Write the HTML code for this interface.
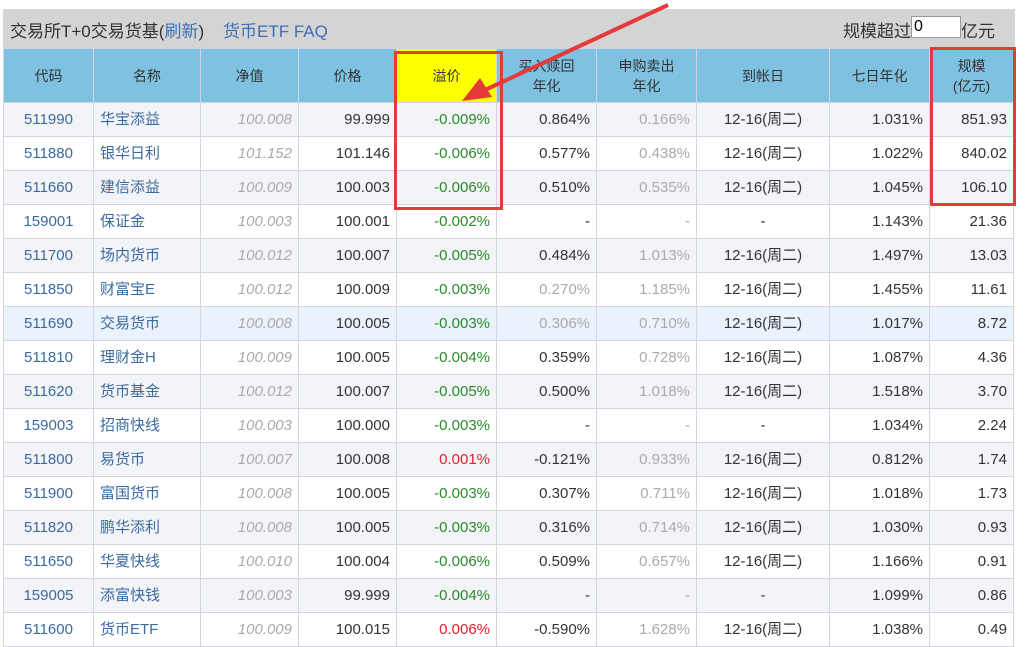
<!DOCTYPE html>
<html><head><meta charset="utf-8"><style>
body{margin:0;width:1027px;height:639px;overflow:hidden;background:#fff;font-family:"Liberation Sans","Noto Sans CJK SC",sans-serif;position:relative}
.bar{position:absolute;left:3px;top:9px;width:1012px;height:39px;background:#d4d4d4;font-size:17px;color:#333}
.bar .l{position:absolute;left:7px;top:8px}
.bar a{color:#3b6fb6}
.bar .r{position:absolute;right:20px;top:8px}
.bar input{width:44px;height:20px;font-size:16px;border:1px solid #999;padding:0 2px;vertical-align:top;margin-top:-1px}
table{position:absolute;left:3px;top:48px;border-collapse:collapse;table-layout:fixed;font-size:15px}
th{background:#7fc1e0;color:#333;font-weight:normal;height:53px;padding:0;border:1px solid #d0d6e0;line-height:20px;font-size:14px}
td{height:33px;padding:0 6px;border:1px solid #d3d6df;text-align:right;color:#333;line-height:18px}
tr.o td{background:#f3f4f8}
tr.h td{background:#eaf2fb}
td.c{text-align:center;color:#3b6aa0}
td.n{text-align:left;color:#3b6aa0}
td.g{color:#aaa;font-style:italic}
td.p{color:#2a8a2a}
td.rd{color:#e0202a}
td.lg{color:#aaa}
td.m{text-align:center}
.box{position:absolute;border:3px solid #e53a3a}
</style></head><body>
<div class="bar"><span class="l">交易所T+0交易货基(<a>刷新</a>) &nbsp;&nbsp;&nbsp;<a>货币ETF FAQ</a></span><span class="r">规模超过<input value="0">亿元</span></div>
<table>
<colgroup><col style="width:90px"><col style="width:107px"><col style="width:98px"><col style="width:98px"><col style="width:100px"><col style="width:100px"><col style="width:100px"><col style="width:133px"><col style="width:100px"><col style="width:84px"></colgroup>
<tr><th>代码</th><th>名称</th><th>净值</th><th>价格</th><th style="background:#ffff00">溢价</th><th>买入赎回<br>年化</th><th>申购卖出<br>年化</th><th>到帐日</th><th>七日年化</th><th>规模<br>(亿元)</th></tr>
<tr class="o"><td class="c">511990</td><td class="n">华宝添益</td><td class="g">100.008</td><td>99.999</td><td class="p">-0.009%</td><td>0.864%</td><td class="lg">0.166%</td><td class="m">12-16(周二)</td><td>1.031%</td><td>851.93</td></tr>
<tr><td class="c">511880</td><td class="n">银华日利</td><td class="g">101.152</td><td>101.146</td><td class="p">-0.006%</td><td>0.577%</td><td class="lg">0.438%</td><td class="m">12-16(周二)</td><td>1.022%</td><td>840.02</td></tr>
<tr class="o"><td class="c">511660</td><td class="n">建信添益</td><td class="g">100.009</td><td>100.003</td><td class="p">-0.006%</td><td>0.510%</td><td class="lg">0.535%</td><td class="m">12-16(周二)</td><td>1.045%</td><td>106.10</td></tr>
<tr><td class="c">159001</td><td class="n">保证金</td><td class="g">100.003</td><td>100.001</td><td class="p">-0.002%</td><td>-</td><td class="lg">-</td><td class="m">-</td><td>1.143%</td><td>21.36</td></tr>
<tr class="o"><td class="c">511700</td><td class="n">场内货币</td><td class="g">100.012</td><td>100.007</td><td class="p">-0.005%</td><td>0.484%</td><td class="lg">1.013%</td><td class="m">12-16(周二)</td><td>1.497%</td><td>13.03</td></tr>
<tr><td class="c">511850</td><td class="n">财富宝E</td><td class="g">100.012</td><td>100.009</td><td class="p">-0.003%</td><td class="lg">0.270%</td><td class="lg">1.185%</td><td class="m">12-16(周二)</td><td>1.455%</td><td>11.61</td></tr>
<tr class="h"><td class="c">511690</td><td class="n">交易货币</td><td class="g">100.008</td><td>100.005</td><td class="p">-0.003%</td><td class="lg">0.306%</td><td class="lg">0.710%</td><td class="m">12-16(周二)</td><td>1.017%</td><td>8.72</td></tr>
<tr><td class="c">511810</td><td class="n">理财金H</td><td class="g">100.009</td><td>100.005</td><td class="p">-0.004%</td><td>0.359%</td><td class="lg">0.728%</td><td class="m">12-16(周二)</td><td>1.087%</td><td>4.36</td></tr>
<tr class="o"><td class="c">511620</td><td class="n">货币基金</td><td class="g">100.012</td><td>100.007</td><td class="p">-0.005%</td><td>0.500%</td><td class="lg">1.018%</td><td class="m">12-16(周二)</td><td>1.518%</td><td>3.70</td></tr>
<tr><td class="c">159003</td><td class="n">招商快线</td><td class="g">100.003</td><td>100.000</td><td class="p">-0.003%</td><td>-</td><td class="lg">-</td><td class="m">-</td><td>1.034%</td><td>2.24</td></tr>
<tr class="o"><td class="c">511800</td><td class="n">易货币</td><td class="g">100.007</td><td>100.008</td><td class="rd">0.001%</td><td>-0.121%</td><td class="lg">0.933%</td><td class="m">12-16(周二)</td><td>0.812%</td><td>1.74</td></tr>
<tr><td class="c">511900</td><td class="n">富国货币</td><td class="g">100.008</td><td>100.005</td><td class="p">-0.003%</td><td>0.307%</td><td class="lg">0.711%</td><td class="m">12-16(周二)</td><td>1.018%</td><td>1.73</td></tr>
<tr class="o"><td class="c">511820</td><td class="n">鹏华添利</td><td class="g">100.008</td><td>100.005</td><td class="p">-0.003%</td><td>0.316%</td><td class="lg">0.714%</td><td class="m">12-16(周二)</td><td>1.030%</td><td>0.93</td></tr>
<tr><td class="c">511650</td><td class="n">华夏快线</td><td class="g">100.010</td><td>100.004</td><td class="p">-0.006%</td><td>0.509%</td><td class="lg">0.657%</td><td class="m">12-16(周二)</td><td>1.166%</td><td>0.91</td></tr>
<tr class="o"><td class="c">159005</td><td class="n">添富快钱</td><td class="g">100.003</td><td>99.999</td><td class="p">-0.004%</td><td>-</td><td class="lg">-</td><td class="m">-</td><td>1.099%</td><td>0.86</td></tr>
<tr><td class="c">511600</td><td class="n">货币ETF</td><td class="g">100.009</td><td>100.015</td><td class="rd">0.006%</td><td>-0.590%</td><td class="lg">1.628%</td><td class="m">12-16(周二)</td><td>1.038%</td><td>0.49</td></tr>
</table>
<div class="box" style="left:394px;top:51px;width:103px;height:153px"></div>
<div class="box" style="left:930px;top:47px;width:80px;height:153px"></div>
<svg style="position:absolute;left:0;top:0" width="1027" height="639"><line x1="668" y1="5" x2="485" y2="90" stroke="#e53a3a" stroke-width="4"/><polygon points="462,101 480,78 492,97" fill="#e53a3a"/></svg>
</body></html>
